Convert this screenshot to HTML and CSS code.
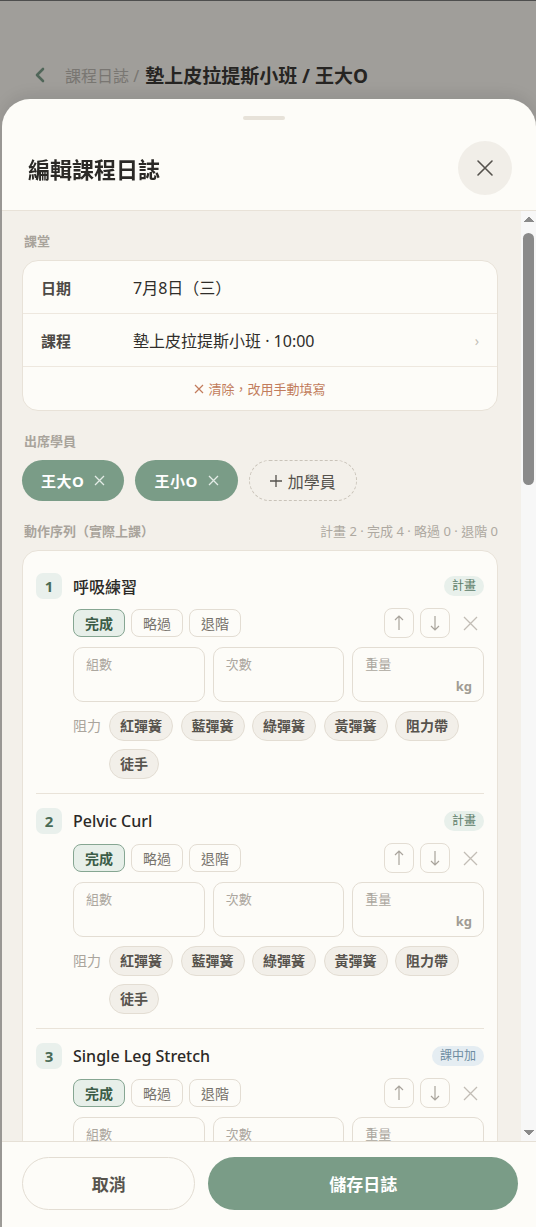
FILE: index.html
```html
<!DOCTYPE html>
<html lang="zh-Hant">
<head>
    <meta charset="UTF-8">
    <title>編輯課程日誌</title>
    <link rel="stylesheet" href="styles.css">
</head>
<body>
    <!-- page behind the sheet -->
    <div class="page">
        <div class="topbar">
            <svg class="back" width="14" height="16" viewBox="0 0 14 16"><polyline points="10,2 4,8 10,14" fill="none" stroke="#7a9c87" stroke-width="2.6" stroke-linecap="round" stroke-linejoin="round"/></svg>
            <span class="crumb">課程日誌 /</span>
            <span class="crumb_title">墊上皮拉提斯小班 / 王大O</span>
        </div>
    </div>
    <div class="scrim"></div>

    <!-- SHEET -->
    <div class="sheet">
        <div class="sheet_head">
            <div class="handle"></div>
            <div class="title_row">
                <h1>編輯課程日誌</h1>
                <button class="close" aria-label="關閉">
                    <svg width="18" height="18" viewBox="0 0 18 18"><path d="M2 2L16 16M16 2L2 16" stroke="#55524d" stroke-width="1.6" stroke-linecap="round"/></svg>
                </button>
            </div>
        </div>

        <div class="sheet_body">
            <div class="section">
                <div class="sec_label">課堂</div>
                <div class="card">
                    <div class="info_row">
                        <span class="info_key">日期</span>
                        <span class="info_val">7月8日（三）</span>
                    </div>
                    <div class="info_row">
                        <span class="info_key">課程</span>
                        <span class="info_val">墊上皮拉提斯小班 · 10:00</span>
                        <span class="info_arrow">›</span>
                    </div>
                    <div class="clear_row">
                        <svg width="10" height="10" viewBox="0 0 10 10"><path d="M1 1L9 9M9 1L1 9" stroke="#c27c5c" stroke-width="1.2"/></svg>
                        清除，改用手動填寫
                    </div>
                </div>
            </div>

            <div class="section">
                <div class="sec_label">出席學員</div>
                <div class="members">
                    <span class="member">王大O <svg width="11" height="11" viewBox="0 0 11 11"><path d="M1 1L10 10M10 1L1 10" stroke="#e3ebe6" stroke-width="1.3"/></svg></span>
                    <span class="member">王小O <svg width="11" height="11" viewBox="0 0 11 11"><path d="M1 1L10 10M10 1L1 10" stroke="#e3ebe6" stroke-width="1.3"/></svg></span>
                    <span class="add_member"><svg width="12" height="12" viewBox="0 0 12 12"><path d="M6 0V12M0 6H12" stroke="#55524d" stroke-width="1.3"/></svg> 加學員</span>
                </div>
            </div>

            <div class="section">
                <div class="sec_label">動作序列（實際上課）<span class="sec_stats">計畫 2 · 完成 4 · 略過 0 · 退階 0</span></div>
                <div class="card ex_card">

                    <div class="ex">
                        <div class="ex_head">
                            <span class="ex_num">1</span>
                            <span class="ex_name">呼吸練習</span>
                            <span class="tag">計畫</span>
                        </div>
                        <div class="ex_body">
                            <div class="ex_controls">
                                <button class="status on">完成</button>
                                <button class="status">略過</button>
                                <button class="status">退階</button>
                                <span class="spacer"></span>
                                <button class="move"><svg width="10" height="16" viewBox="0 0 10 16"><path d="M5 15V1M1 5L5 1L9 5" fill="none" stroke="#a9a49c" stroke-width="1.2"/></svg></button>
                                <button class="move"><svg width="10" height="16" viewBox="0 0 10 16"><path d="M5 1V15M1 11L5 15L9 11" fill="none" stroke="#a9a49c" stroke-width="1.2"/></svg></button>
                                <button class="remove"><svg width="15" height="15" viewBox="0 0 15 15"><path d="M1 1L14 14M14 1L1 14" stroke="#c2bdb5" stroke-width="1.3"/></svg></button>
                            </div>
                            <div class="ex_inputs">
                                <div class="field"><span>組數</span></div>
                                <div class="field"><span>次數</span></div>
                                <div class="field"><span>重量</span><b class="unit">kg</b></div>
                            </div>
                            <div class="ex_resist">
                                <span class="resist_label">阻力</span>
                                <div class="chips">
                                    <span class="chip">紅彈簧</span>
                                    <span class="chip">藍彈簧</span>
                                    <span class="chip">綠彈簧</span>
                                    <span class="chip">黃彈簧</span>
                                    <span class="chip">阻力帶</span>
                                    <span class="chip">徒手</span>
                                </div>
                            </div>
                        </div>
                    </div>

                    <div class="ex">
                        <div class="ex_head">
                            <span class="ex_num">2</span>
                            <span class="ex_name">Pelvic Curl</span>
                            <span class="tag">計畫</span>
                        </div>
                        <div class="ex_body">
                            <div class="ex_controls">
                                <button class="status on">完成</button>
                                <button class="status">略過</button>
                                <button class="status">退階</button>
                                <span class="spacer"></span>
                                <button class="move"><svg width="10" height="16" viewBox="0 0 10 16"><path d="M5 15V1M1 5L5 1L9 5" fill="none" stroke="#a9a49c" stroke-width="1.2"/></svg></button>
                                <button class="move"><svg width="10" height="16" viewBox="0 0 10 16"><path d="M5 1V15M1 11L5 15L9 11" fill="none" stroke="#a9a49c" stroke-width="1.2"/></svg></button>
                                <button class="remove"><svg width="15" height="15" viewBox="0 0 15 15"><path d="M1 1L14 14M14 1L1 14" stroke="#c2bdb5" stroke-width="1.3"/></svg></button>
                            </div>
                            <div class="ex_inputs">
                                <div class="field"><span>組數</span></div>
                                <div class="field"><span>次數</span></div>
                                <div class="field"><span>重量</span><b class="unit">kg</b></div>
                            </div>
                            <div class="ex_resist">
                                <span class="resist_label">阻力</span>
                                <div class="chips">
                                    <span class="chip">紅彈簧</span>
                                    <span class="chip">藍彈簧</span>
                                    <span class="chip">綠彈簧</span>
                                    <span class="chip">黃彈簧</span>
                                    <span class="chip">阻力帶</span>
                                    <span class="chip">徒手</span>
                                </div>
                            </div>
                        </div>
                    </div>

                    <div class="ex">
                        <div class="ex_head">
                            <span class="ex_num">3</span>
                            <span class="ex_name">Single Leg Stretch</span>
                            <span class="tag tag_add">課中加</span>
                        </div>
                        <div class="ex_body">
                            <div class="ex_controls">
                                <button class="status on">完成</button>
                                <button class="status">略過</button>
                                <button class="status">退階</button>
                                <span class="spacer"></span>
                                <button class="move"><svg width="10" height="16" viewBox="0 0 10 16"><path d="M5 15V1M1 5L5 1L9 5" fill="none" stroke="#a9a49c" stroke-width="1.2"/></svg></button>
                                <button class="move"><svg width="10" height="16" viewBox="0 0 10 16"><path d="M5 1V15M1 11L5 15L9 11" fill="none" stroke="#a9a49c" stroke-width="1.2"/></svg></button>
                                <button class="remove"><svg width="15" height="15" viewBox="0 0 15 15"><path d="M1 1L14 14M14 1L1 14" stroke="#c2bdb5" stroke-width="1.3"/></svg></button>
                            </div>
                            <div class="ex_inputs">
                                <div class="field"><span>組數</span></div>
                                <div class="field"><span>次數</span></div>
                                <div class="field"><span>重量</span><b class="unit">kg</b></div>
                            </div>
                            <div class="ex_resist">
                                <span class="resist_label">阻力</span>
                                <div class="chips">
                                    <span class="chip">紅彈簧</span>
                                    <span class="chip">藍彈簧</span>
                                    <span class="chip">綠彈簧</span>
                                    <span class="chip">黃彈簧</span>
                                    <span class="chip">阻力帶</span>
                                    <span class="chip">徒手</span>
                                </div>
                            </div>
                        </div>
                    </div>

                    <div class="ex">
                        <div class="ex_head">
                            <span class="ex_num">4</span>
                            <span class="ex_name">Side Kick</span>
                            <span class="tag tag_add">課中加</span>
                        </div>
                        <div class="ex_body">
                            <div class="ex_controls">
                                <button class="status on">完成</button>
                                <button class="status">略過</button>
                                <button class="status">退階</button>
                                <span class="spacer"></span>
                                <button class="move"><svg width="10" height="16" viewBox="0 0 10 16"><path d="M5 15V1M1 5L5 1L9 5" fill="none" stroke="#a9a49c" stroke-width="1.2"/></svg></button>
                                <button class="move"><svg width="10" height="16" viewBox="0 0 10 16"><path d="M5 1V15M1 11L5 15L9 11" fill="none" stroke="#a9a49c" stroke-width="1.2"/></svg></button>
                                <button class="remove"><svg width="15" height="15" viewBox="0 0 15 15"><path d="M1 1L14 14M14 1L1 14" stroke="#c2bdb5" stroke-width="1.3"/></svg></button>
                            </div>
                            <div class="ex_inputs">
                                <div class="field"><span>組數</span></div>
                                <div class="field"><span>次數</span></div>
                                <div class="field"><span>重量</span><b class="unit">kg</b></div>
                            </div>
                            <div class="ex_resist">
                                <span class="resist_label">阻力</span>
                                <div class="chips">
                                    <span class="chip">紅彈簧</span>
                                    <span class="chip">藍彈簧</span>
                                    <span class="chip">綠彈簧</span>
                                    <span class="chip">黃彈簧</span>
                                    <span class="chip">阻力帶</span>
                                    <span class="chip">徒手</span>
                                </div>
                            </div>
                        </div>
                    </div>
                </div>
                <button class="add_ex">＋ 新增動作</button>
            </div>

            <div class="section">
                <div class="sec_label">課堂筆記</div>
                <div class="note_box">學員今日狀況、觀察與調整…</div>
            </div>
            <div class="section">
                <div class="sec_label">學員回饋</div>
                <div class="note_box">學員回饋或身體感受…</div>
            </div>
            <div class="section">
                <div class="sec_label">下次課程建議</div>
                <div class="note_box">下次想加強的部分…</div>
            </div>
        </div>

        <!-- scrollbar drawn over the body's right edge -->
        <div class="scrollbar">
            <span class="sb_arrow sb_up"></span>
            <span class="sb_track"><span class="sb_thumb"></span></span>
            <span class="sb_arrow sb_down"></span>
        </div>

        <div class="sheet_foot">
            <button class="btn_cancel">取消</button>
            <button class="btn_save">儲存日誌</button>
        </div>
    </div>
</body>
</html>
```

FILE: styles.css
```css
/*  BASE  */
body {
    margin: 0;
    height: 1227px;
    overflow: hidden;
    background-color: #f3f0ea;
    font-family: "Noto Sans", "Noto Sans CJK TC", sans-serif;
    color: #2b2926;
}
button {
    font-family: inherit;
    cursor: pointer;
}

/*  PAGE BEHIND  */
.page {
    border-top: 1px solid #777;
}
.topbar {
    display: flex;
    align-items: center;
    gap: 6px;
    height: 30px;
    margin-top: 59px;
    padding-left: 33px;
}
.back {
    margin-right: 12px;
}
.crumb {
    font-size: 16px;
    color: #b8b4ad;
}
.crumb_title {
    font-size: 19px;
    font-weight: 700;
    color: #3a3835;
}
.scrim {
    position: fixed;
    top: 0;
    left: 0;
    width: 100%;
    height: 100%;
    background-color: rgba(0, 0, 0, 0.34);
}

/*  SHEET  */
.sheet {
    position: fixed;
    top: 99px;
    left: 2px;
    right: 0;
    bottom: 0;
    display: flex;
    flex-direction: column;
    background-color: #fdfcf8;
    border-radius: 28px 28px 0 0;
    box-shadow: 0 -4px 18px rgba(0, 0, 0, 0.1);
    overflow: hidden;
}
.sheet_head {
    flex: none;
    padding: 17px 24px 15px 26px;
    border-bottom: 1px solid #e8e2d8;
}
.handle {
    width: 42px;
    height: 4px;
    border-radius: 2px;
    background-color: #e7e2d9;
    margin: 0 auto;
    position: relative;
    right: 6px;
}
.title_row {
    display: flex;
    align-items: center;
    justify-content: space-between;
    margin-top: 21px;
}
.title_row h1 {
    margin: 0;
    font-size: 22px;
    font-weight: 700;
    color: #2b2926;
}
.close {
    width: 54px;
    height: 54px;
    border: none;
    border-radius: 50%;
    background-color: #f1eee8;
    display: grid;
    place-items: center;
    padding: 0;
}

.sheet_body {
    flex: 1;
    overflow-y: auto;
    scrollbar-width: none;
    background-color: #f3f0ea;
    padding: 21px 38px 30px 20px;
}
.sheet_body::-webkit-scrollbar {
    display: none;
}
.section + .section {
    margin-top: 21px;
}
.sec_label {
    display: flex;
    justify-content: space-between;
    font-size: 13px;
    line-height: 18px;
    font-weight: 600;
    color: #a9a49c;
    margin-bottom: 10px;
    padding-left: 2px;
}
.sec_stats {
    font-weight: 400;
    color: #aea9a1;
}

/*  SCROLLBAR  */
.scrollbar {
    position: absolute;
    top: 112px;
    bottom: 86px;
    right: 0;
    width: 15px;
    display: flex;
    flex-direction: column;
    background-color: #f7f7f7;
}
.sb_arrow {
    flex: none;
    height: 15px;
    background-repeat: no-repeat;
    background-size: 5px 6px;
}
.sb_up {
    background-image: linear-gradient(to top left, #8a8a8a 50%, transparent 50%),
                      linear-gradient(to top right, #8a8a8a 50%, transparent 50%);
    background-position: 2.5px 5px, 7.5px 5px;
}
.sb_down {
    background-image: linear-gradient(to bottom left, #8a8a8a 50%, transparent 50%),
                      linear-gradient(to bottom right, #8a8a8a 50%, transparent 50%);
    background-position: 2.5px 4px, 7.5px 4px;
}
.sb_track {
    flex: 1;
    padding-top: 7px;
}
.sb_thumb {
    display: block;
    width: 11px;
    height: 252px;
    margin-left: 2px;
    border-radius: 5.5px;
    background-color: #8a8a8a;
}

/*  CARDS  */
.card {
    background-color: #fdfcf8;
    border: 1px solid #e8e2d8;
    border-radius: 16px;
}
.info_row {
    display: flex;
    align-items: center;
    height: 52px;
    padding: 0 18px;
    border-bottom: 1px solid #eee8df;
}
.info_key {
    width: 92px;
    font-size: 15px;
    font-weight: 700;
    color: #4d4a46;
}
.info_val {
    flex: 1;
    font-size: 16px;
    color: #2f2d2a;
}
.info_arrow {
    color: #c4bfb7;
    font-size: 14px;
}
.clear_row {
    display: flex;
    align-items: center;
    justify-content: center;
    gap: 4px;
    height: 43px;
    font-size: 13px;
    color: #c27c5c;
}

/*  MEMBERS  */
.members {
    display: flex;
    gap: 11px;
}
.member, .add_member {
    display: flex;
    align-items: center;
    height: 41px;
    border-radius: 21px;
    box-sizing: border-box;
}
.member {
    gap: 10px;
    padding: 0 19px;
    background-color: #7a9c87;
    color: #fff;
    font-size: 15px;
    font-weight: 700;
    letter-spacing: 0.5px;
}
.add_member {
    gap: 6px;
    padding: 0 20px;
    border: 1px dashed #c9c3b9;
    color: #55524d;
    font-size: 16px;
}

/*  EXERCISES  */
.ex_card {
    padding: 8px 13px;
}
.ex {
    padding: 14px 0;
}
.ex + .ex {
    border-top: 1px solid #e9e3d9;
}
.ex_head {
    display: flex;
    align-items: center;
    gap: 11px;
    height: 26px;
}
.ex_num {
    display: grid;
    place-items: center;
    width: 26px;
    height: 26px;
    border-radius: 7px;
    background-color: #e9f0ec;
    color: #4a6b56;
    font-size: 15px;
    font-weight: 700;
}
.ex_name {
    flex: 1;
    font-size: 16px;
    font-weight: 500;
    color: #2b2926;
}
.tag {
    height: 20px;
    line-height: 20px;
    padding: 0 8px;
    border-radius: 10px;
    font-size: 12px;
    background-color: #e8f0eb;
    color: #5c7c68;
}
.tag_add {
    background-color: #e5edf2;
    color: #6d8ca1;
}
.ex_body {
    padding-left: 37px;
}
.ex_controls {
    display: flex;
    align-items: center;
    gap: 6px;
    height: 30px;
    margin-top: 9px;
}
.status {
    height: 28px;
    padding: 0 11px;
    border: 1px solid #e3ddd3;
    border-radius: 8px;
    background-color: #fdfcf8;
    font-size: 14px;
    color: #77736c;
}
.status.on {
    background-color: #e7efe9;
    border-color: #86a692;
    color: #3b5c47;
    font-weight: 700;
}
.spacer {
    flex: 1;
}
.move {
    display: grid;
    place-items: center;
    width: 30px;
    height: 30px;
    padding: 0;
    border: 1px solid #e3ddd3;
    border-radius: 8px;
    background-color: #fdfcf8;
}
.remove {
    display: grid;
    place-items: center;
    width: 28px;
    height: 30px;
    padding: 0;
    border: none;
    background: none;
}
.ex_inputs {
    display: grid;
    grid-template-columns: repeat(3, 1fr);
    gap: 8px;
    margin-top: 9px;
}
.field {
    display: flex;
    flex-direction: column;
    height: 55px;
    box-sizing: border-box;
    padding: 7px 11px 6px 12px;
    border: 1px solid #e3ddd3;
    border-radius: 10px;
    background-color: #fdfcf8;
    font-size: 13px;
    line-height: 18px;
    color: #aca79f;
}
.unit {
    margin-top: auto;
    align-self: flex-end;
    color: #a19c94;
}
.ex_resist {
    display: flex;
    gap: 8px;
    margin-top: 9px;
}
.resist_label {
    flex: none;
    font-size: 14px;
    line-height: 30px;
    color: #aaa59d;
}
.chips {
    display: flex;
    flex-wrap: wrap;
    gap: 8px 7.5px;
}
.chip {
    height: 30px;
    line-height: 28px;
    box-sizing: border-box;
    padding: 0 10px;
    border: 1px solid #e3ddd3;
    border-radius: 15px;
    background-color: #f2efe9;
    font-size: 14px;
    font-weight: 700;
    color: #57534d;
}
.add_ex {
    width: 100%;
    height: 46px;
    margin-top: 12px;
    border: 1px dashed #c9c3b9;
    border-radius: 14px;
    background: none;
    font-size: 15px;
    color: #6b6760;
}
.note_box {
    height: 150px;
    box-sizing: border-box;
    padding: 14px 16px;
    border: 1px solid #e8e2d8;
    border-radius: 16px;
    background-color: #fdfcf8;
    font-size: 14px;
    color: #b5b0a8;
}

/*  FOOTER  */
.sheet_foot {
    flex: none;
    display: flex;
    gap: 13px;
    padding: 15px 18px 17px 20px;
    border-top: 1px solid #e6e0d6;
    background-color: #fdfcf8;
}
.btn_cancel, .btn_save {
    height: 53px;
    padding: 0;
    border-radius: 27px;
    font-size: 17px;
    font-weight: 700;
}
.btn_cancel {
    flex: 172;
    border: 1px solid #e3ddd3;
    background-color: #fdfcf8;
    color: #57534d;
}
.btn_save {
    flex: 311;
    border: none;
    background-color: #7a9c87;
    color: #fff;
}
```
